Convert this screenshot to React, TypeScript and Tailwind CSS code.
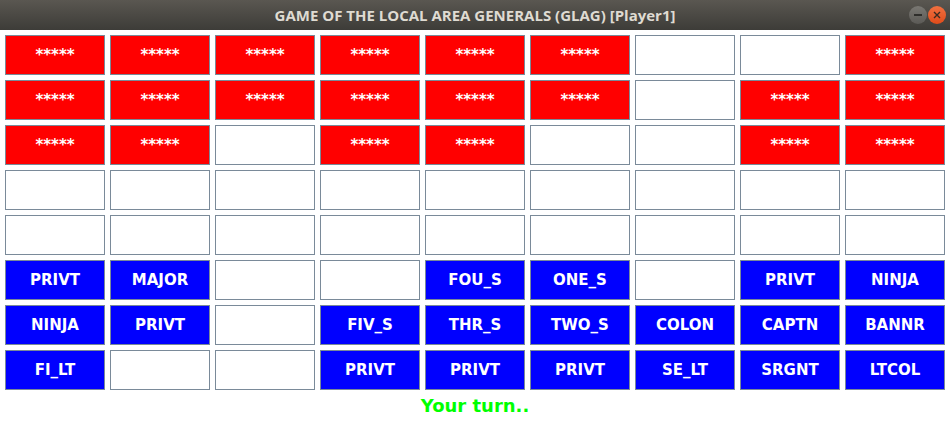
import React from "react";

type Cell = { t: "r" } | { t: "e" } | { t: "b"; s: string };

const R: Cell = { t: "r" };
const E: Cell = { t: "e" };
const B = (s: string): Cell => ({ t: "b", s });

const rows: Cell[][] = [
  [R, R, R, R, R, R, E, E, R],
  [R, R, R, R, R, R, E, R, R],
  [R, R, E, R, R, E, E, R, R],
  [E, E, E, E, E, E, E, E, E],
  [E, E, E, E, E, E, E, E, E],
  [B("PRIVT"), B("MAJOR"), E, E, B("FOU_S"), B("ONE_S"), E, B("PRIVT"), B("NINJA")],
  [B("NINJA"), B("PRIVT"), E, B("FIV_S"), B("THR_S"), B("TWO_S"), B("COLON"), B("CAPTN"), B("BANNR")],
  [B("FI_LT"), E, E, B("PRIVT"), B("PRIVT"), B("PRIVT"), B("SE_LT"), B("SRGNT"), B("LTCOL")],
];

export default function App() {
  return (
    <div className="w-[950px] h-[430px] bg-white overflow-hidden relative" style={{ fontFamily: '"DejaVu Sans", sans-serif' }}>
      <div className="h-[30px] bg-gradient-to-b from-[#5a5751] to-[#3d3c38] flex items-center justify-center relative">
        <span className="text-[15px] font-bold text-[#dfdbd2]" style={{ fontFamily: '"Open Sans", sans-serif' }}>
          GAME OF THE LOCAL AREA GENERALS (GLAG) [Player1]
        </span>
        <div className="absolute right-[4px] top-[6px] flex gap-[1px]">
          <div className="w-[18px] h-[18px] rounded-full bg-gradient-to-b from-[#7a7873] to-[#5b5a56] flex items-center justify-center">
            <div className="w-[8px] h-[1.5px] bg-[#2f2e2b]" />
          </div>
          <div className="w-[18px] h-[18px] rounded-full bg-gradient-to-b from-[#f0703f] to-[#df4b19] flex items-center justify-center">
            <svg width="8" height="8" viewBox="0 0 8 8">
              <path d="M1 1 L7 7 M7 1 L1 7" stroke="#3a2a20" strokeWidth="1.4" />
            </svg>
          </div>
        </div>
      </div>
      <div className="px-[5px] pt-[5px] flex flex-col gap-[5px]">
        {rows.map((row, i) => (
          <div key={i} className="flex gap-[5px]">
            {row.map((c, j) => (
              <div
                key={j}
                className={
                  "w-[100px] h-[40px] border border-[#7a8a99] flex items-center justify-center font-bold text-white " +
                  (c.t === "r" ? "bg-[#ff0000] text-[15px]" : c.t === "b" ? "bg-[#0000ff] text-[15px]" : "bg-white")
                }
              >
                {c.t === "r" ? "*****" : c.t === "b" ? c.s : ""}
              </div>
            ))}
          </div>
        ))}
      </div>
      <div className="flex justify-center mt-[4px]">
        <span className="text-[#00ff00] font-bold text-[18px] leading-[24px]">Your turn..</span>
      </div>
    </div>
  );
}
